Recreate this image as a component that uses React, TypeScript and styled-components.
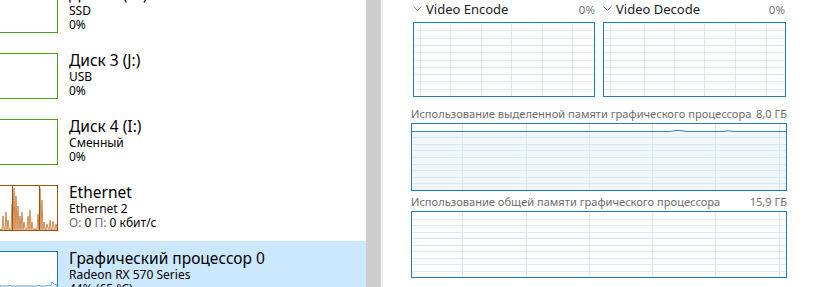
import * as React from 'react';
import styled, { createGlobalStyle } from 'styled-components';

const GlobalStyle = createGlobalStyle`
    html, body {
        margin: 0;
        padding: 0;
        background: #fff;
        overflow: hidden;
    }
    body {
        font-family: 'Noto Sans', 'Open Sans', sans-serif;
        color: #000;
    }
`;

const Window = styled.div`
    width: 814px;
    height: 287px;
    display: flex;
    overflow: hidden;
`;

const LeftPane = styled.div`
    width: 366px;
    flex: none;
    overflow: hidden;
`;

const List = styled.div`
    transform: translateY(-23px);
`;

const Item = styled.div<{ $selected?: boolean }>`
    height: 66px;
    display: flex;
    align-items: flex-start;
    padding-top: 10px;
    box-sizing: border-box;
    background: ${(p) => (p.$selected ? '#cce8ff' : 'transparent')};
`;

const Thumb = styled.div<{ $color: string }>`
    width: 59px;
    height: 46px;
    margin-left: -1px;
    flex: none;
    box-sizing: border-box;
    border: 1px solid ${(p) => p.$color};
    background: #fff;
    overflow: hidden;
    svg {
        display: block;
    }
`;

const Info = styled.div`
    margin-left: 11px;
    margin-top: -3px;
    white-space: nowrap;
`;

const Title = styled.div`
    font-size: 15.5px;
    line-height: 20px;
    color: #000;
`;

const Sub = styled.div`
    font-size: 12px;
    line-height: 14px;
    color: #000;
`;

const Dim = styled.span`
    color: #6d6d6d;
`;

const Scrollbar = styled.div`
    width: 15px;
    flex: none;
    background: #cdcdcd;
`;

const Divider = styled.div`
    width: 1px;
    flex: none;
    margin-left: 1px;
    background: #e3e3e3;
`;

const RightPane = styled.div`
    flex: 1;
    padding-left: 28px;
    display: flex;
    flex-direction: column;
`;

const EngineRow = styled.div`
    display: flex;
    gap: 7px;
    padding-left: 2px;
`;

const Engine = styled.div`
    width: 183px;
`;

const EngineHead = styled.div`
    display: flex;
    align-items: center;
    height: 18px;
    margin-bottom: 4px;
    padding-right: 1px;
`;

const EngineName = styled.span`
    font-size: 13px;
    color: #1a1a1a;
    margin-left: 4px;
    flex: 1;
`;

const Value = styled.span`
    font-size: 11.5px;
    color: #707070;
`;

const MemBlock = styled.div<{ $top: number }>`
    width: 376px;
    margin-top: ${(p) => p.$top}px;
`;

const MemHead = styled.div`
    display: flex;
    justify-content: space-between;
    height: 14px;
    line-height: 14px;
    margin-bottom: 2px;
    font-size: 11.1px;
    color: #6d6d6d;
    white-space: nowrap;
`;

const Chevron = () => (
    <svg width="9" height="6" viewBox="0 0 9 6">
        <polyline points="0.5,0.5 4.5,4.5 8.5,0.5" fill="none" stroke="#8a8a8a" strokeWidth="1" />
    </svg>
);

interface GraphProps {
    width: number;
    height: number;
    cols: number[];
    rows?: number;
    fillFrom?: number;
    children?: React.ReactNode;
}

const Graph: React.FC<GraphProps> = ({ width, height, cols, rows = 10, fillFrom, children }) => {
    const inner = height - 2;
    const lines = [];
    for (let i = 1; i < rows; i++) {
        const y = Math.round(1 + (inner * i) / rows) + 0.5;
        lines.push(<line key={'h' + i} x1={0} x2={width} y1={y} y2={y} stroke="#d9eaf4" />);
    }
    return (
        <svg width={width} height={height} style={{ display: 'block' }}>
            <rect x={0} y={0} width={width} height={height} fill="#fff" />
            {fillFrom !== undefined && (
                <rect x={0} y={fillFrom} width={width} height={height - fillFrom} fill="#f1f6fa" />
            )}
            {lines}
            {cols.map((x) => (
                <line key={'v' + x} x1={x + 0.5} x2={x + 0.5} y1={0} y2={height} stroke="#d9eaf4" />
            ))}
            {children}
            <rect x={0.5} y={0.5} width={width - 1} height={height - 1} fill="none" stroke="#1b7bc6" />
        </svg>
    );
};

const ethernetPeaks = [
    [3, 30], [6, 26], [8, 34], [12, 18], [14, 2], [16, 10], [18, 20], [20, 30],
    [22, 26], [24, 36], [28, 30], [30, 24], [32, 36], [38, 28], [40, 2], [42, 14],
    [44, 36], [47, 38], [50, 34], [53, 35], [56, 38],
];

const EthernetThumb = () => {
    const pts = ['0,44'];
    ethernetPeaks.forEach(([x, y], i) => {
        pts.push(`${x - 1},43`);
        pts.push(`${x},${y}`);
        pts.push(`${x + 1},${i % 2 ? 42 : 43}`);
    });
    pts.push('57,44');
    return (
        <svg width="57" height="44">
            <defs>
                <linearGradient id="eth" x1="0" y1="0" x2="0" y2="1">
                    <stop offset="0" stopColor="#c0651e" stopOpacity="0.85" />
                    <stop offset="1" stopColor="#f2c9a8" stopOpacity="0.5" />
                </linearGradient>
            </defs>
            <polygon points={pts.join(' ')} fill="url(#eth)" stroke="#c06a25" strokeWidth="0.7" />
            <line x1="12.5" x2="12.5" y1="0" y2="44" stroke="#a74f01" />
            <line x1="39.5" x2="39.5" y1="0" y2="44" stroke="#a74f01" />
        </svg>
    );
};

const GpuThumb = () => (
    <svg width="57" height="44">
        <polygon
            points="0,44 0,34 9,34 10,33 11,34 38,34 39,33 40,34 46,34 49,33 51,34 52,30 54,32 57,33 57,44"
            fill="#eef5fb"
            stroke="#4a90c8"
            strokeWidth="0.8"
        />
    </svg>
);

export default function App() {
    const encodeCols = [7, 37, 68, 98, 129, 159];
    const decodeCols = [7, 41, 71, 101, 132, 163];
    const memCols = [51, 115, 178, 241, 304, 368];
    return (
        <>
            <GlobalStyle />
            <Window>
                <LeftPane>
                    <List>
                        <Item>
                            <Thumb $color="#4da60c" />
                            <Info>
                                <Title>Диск 2 (D:)</Title>
                                <Sub>SSD</Sub>
                                <Sub>0%</Sub>
                            </Info>
                        </Item>
                        <Item>
                            <Thumb $color="#4da60c" />
                            <Info>
                                <Title>Диск 3 (J:)</Title>
                                <Sub>USB</Sub>
                                <Sub>0%</Sub>
                            </Info>
                        </Item>
                        <Item>
                            <Thumb $color="#4da60c" />
                            <Info>
                                <Title>Диск 4 (I:)</Title>
                                <Sub>Сменный</Sub>
                                <Sub>0%</Sub>
                            </Info>
                        </Item>
                        <Item>
                            <Thumb $color="#a74f01">
                                <EthernetThumb />
                            </Thumb>
                            <Info>
                                <Title>Ethernet</Title>
                                <Sub>Ethernet 2</Sub>
                                <Sub>
                                    <Dim>О:</Dim> 0 <Dim>П:</Dim> 0 кбит/с
                                </Sub>
                            </Info>
                        </Item>
                        <Item $selected>
                            <Thumb $color="#1b7bc6">
                                <GpuThumb />
                            </Thumb>
                            <Info>
                                <Title>Графический процессор 0</Title>
                                <Sub>Radeon RX 570 Series</Sub>
                                <Sub>44% (65 °C)</Sub>
                            </Info>
                        </Item>
                    </List>
                </LeftPane>
                <Scrollbar />
                <Divider />
                <RightPane>
                    <EngineRow>
                        <Engine>
                            <EngineHead>
                                <Chevron />
                                <EngineName>Video Encode</EngineName>
                                <Value>0%</Value>
                            </EngineHead>
                            <Graph width={182} height={75} cols={encodeCols} />
                        </Engine>
                        <Engine>
                            <EngineHead>
                                <Chevron />
                                <EngineName>Video Decode</EngineName>
                                <Value>0%</Value>
                            </EngineHead>
                            <Graph width={183} height={75} cols={decodeCols} />
                        </Engine>
                    </EngineRow>
                    <MemBlock $top={10}>
                        <MemHead>
                            <span>Использование выделенной памяти графического процессора</span>
                            <span>8,0 ГБ</span>
                        </MemHead>
                        <Graph width={376} height={68} cols={memCols} fillFrom={9}>
                            <path
                                d="M0 8.5 H259 C263 7 271 7 275 8.5 H313 C316 7.5 319 7.5 322 8.5 H376"
                                fill="none"
                                stroke="#2f86cc"
                                strokeWidth="1"
                            />
                        </Graph>
                    </MemBlock>
                    <MemBlock $top={4}>
                        <MemHead>
                            <span>Использование общей памяти графического процессора</span>
                            <span>15,9 ГБ</span>
                        </MemHead>
                        <Graph width={376} height={67} cols={memCols} />
                    </MemBlock>
                </RightPane>
            </Window>
        </>
    );
}
